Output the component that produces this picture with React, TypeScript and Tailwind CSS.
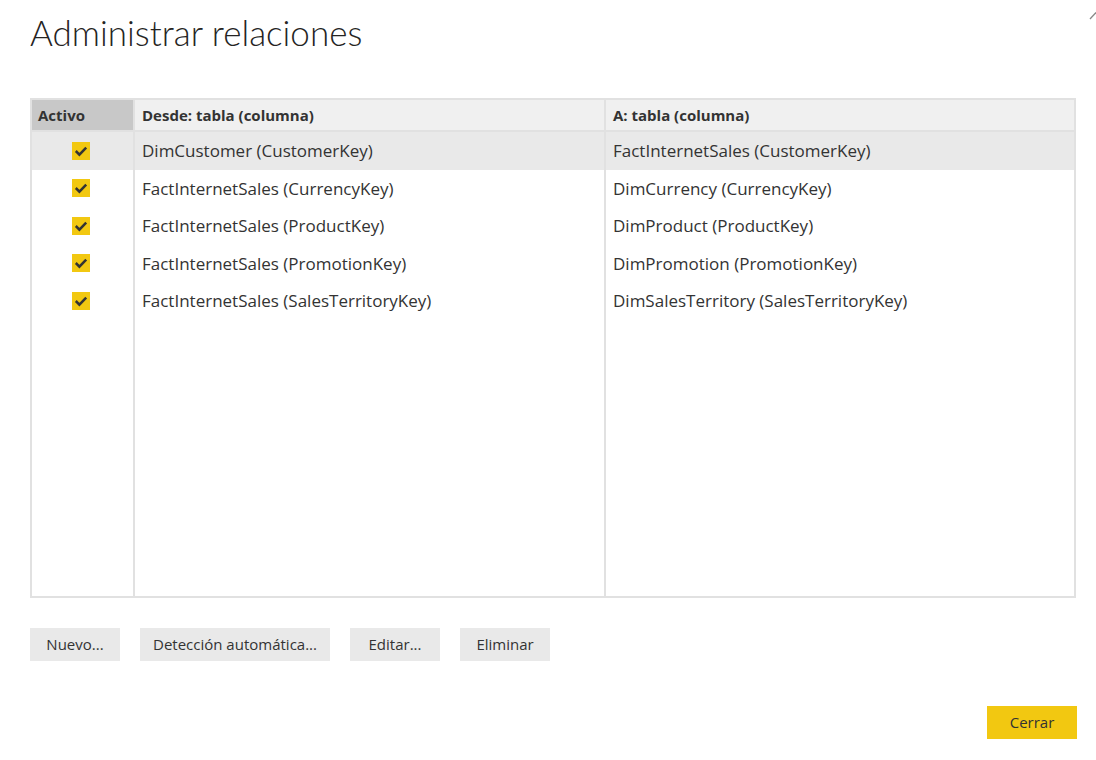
import React from 'react';

const rows = [
  ['DimCustomer (CustomerKey)', 'FactInternetSales (CustomerKey)'],
  ['FactInternetSales (CurrencyKey)', 'DimCurrency (CurrencyKey)'],
  ['FactInternetSales (ProductKey)', 'DimProduct (ProductKey)'],
  ['FactInternetSales (PromotionKey)', 'DimPromotion (PromotionKey)'],
  ['FactInternetSales (SalesTerritoryKey)', 'DimSalesTerritory (SalesTerritoryKey)'],
];

function Check() {
  return (
    <span className="flex h-[18px] w-[18px] items-center justify-center bg-[#f2c811]">
      <svg width="18" height="18" viewBox="0 0 18 18">
        <path d="M3.8 9 L7.4 12.6 L14.2 5.6" fill="none" stroke="#333" strokeWidth="2.5" />
      </svg>
    </span>
  );
}

const font = { fontFamily: '"Open Sans", "Noto Sans", sans-serif' };

export default function App() {
  return (
    <div className="relative min-h-[760px] w-[1096px] bg-white text-[#333]" style={font}>
      <svg className="absolute right-0 top-0" width="10" height="12" viewBox="0 0 10 12">
        <path d="M10 2.5 L4 9" stroke="#888" strokeWidth="1.3" />
      </svg>

      <div className="pl-[30px]">
        <h1
          className="mt-[10px] text-[35px] font-light leading-[44px] text-[#252423]"
          style={{ fontFamily: 'Lato, "Open Sans", sans-serif' }}
        >
          Administrar relaciones
        </h1>

        <div className="mt-[44px] flex h-[500px] w-[1046px] border-2 border-[#e1e1e1]">
          <div className="w-[103px] border-r-2 border-[#e1e1e1]">
            <div className="flex h-[32px] items-center border-b-2 border-[#e1e1e1] bg-[#c8c8c8] pl-[6px] text-[15px] font-bold">
              Activo
            </div>
            {rows.map((r, i) => (
              <div key={i} className={`flex h-[37.5px] items-center justify-center pr-[3px] ${i === 0 ? 'bg-[#e9e9e9]' : ''}`}>
                <Check />
              </div>
            ))}
          </div>
          <div className="w-[471px] border-r-2 border-[#e1e1e1]">
            <div className="flex h-[32px] items-center border-b-2 border-[#e1e1e1] bg-[#f0f0f0] pl-[7px] text-[15px] font-bold">
              Desde: tabla (columna)
            </div>
            {rows.map((r, i) => (
              <div key={i} className={`flex h-[37.5px] items-center pl-[7px] text-[17px] ${i === 0 ? 'bg-[#e9e9e9]' : ''}`}>
                {r[0]}
              </div>
            ))}
          </div>
          <div className="flex-1">
            <div className="flex h-[32px] items-center border-b-2 border-[#e1e1e1] bg-[#f0f0f0] pl-[7px] text-[15px] font-bold">
              A: tabla (columna)
            </div>
            {rows.map((r, i) => (
              <div key={i} className={`flex h-[37.5px] items-center pl-[7px] text-[17px] ${i === 0 ? 'bg-[#e9e9e9]' : ''}`}>
                {r[1]}
              </div>
            ))}
          </div>
        </div>

        <div className="mt-[30px] flex gap-[20px] text-[15px]">
          <button className="h-[33px] w-[90px] bg-[#e9e9e9]">Nuevo...</button>
          <button className="h-[33px] w-[190px] bg-[#e9e9e9]">Detección automática...</button>
          <button className="h-[33px] w-[90px] bg-[#e9e9e9]">Editar...</button>
          <button className="h-[33px] w-[90px] bg-[#e9e9e9]">Eliminar</button>
        </div>

        <div className="mt-[45px] flex w-[1047px] justify-end">
          <button className="h-[33px] w-[90px] bg-[#f2c811] text-[15px]">Cerrar</button>
        </div>
      </div>
    </div>
  );
}
